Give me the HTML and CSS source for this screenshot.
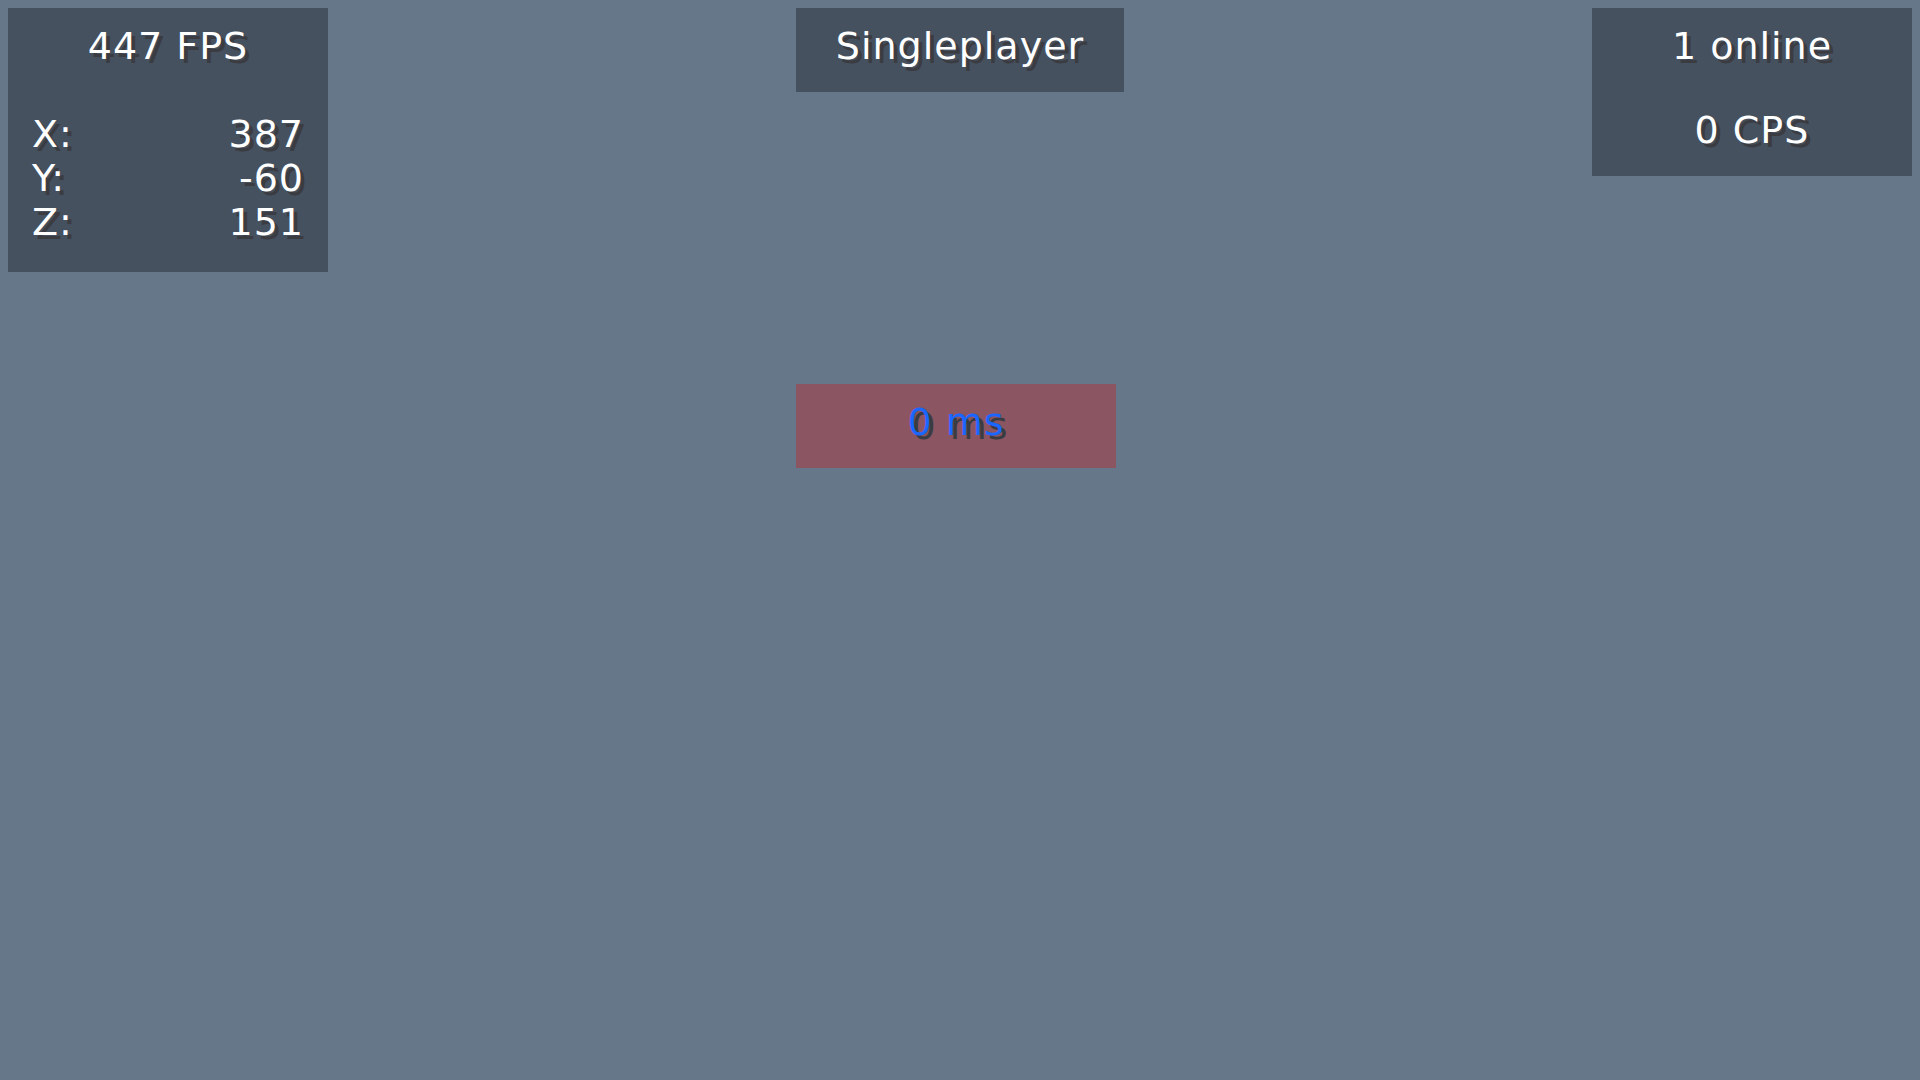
FILE: index.html
```html
<!DOCTYPE html>
<html lang="en">
<head>
<meta charset="utf-8">
<title>HUD</title>
<link rel="stylesheet" href="styles.css">
</head>
<body>
<div class="hud">
  <div class="panel stats">
    <div class="line center">447 FPS</div>
    <div class="coords">
      <div class="row"><span>X:</span><span>387</span></div>
      <div class="row"><span>Y:</span><span>-60</span></div>
      <div class="row"><span>Z:</span><span>151</span></div>
    </div>
  </div>
  <div class="middle">
    <div class="panel mode"><div class="line center">Singleplayer</div></div>
    <div class="panel ping"><div class="line center">0 ms</div></div>
  </div>
  <div class="panel online">
    <div class="line center">1 online</div>
    <div class="line center">0 CPS</div>
  </div>
</div>
</body>
</html>
```
FILE: styles.css
```css
html, body {
  margin: 0;
  padding: 0;
  width: 1920px;
  height: 1080px;
  background: #667789;
  overflow: hidden;
}
body {
  font-family: "DejaVu Sans", "Liberation Sans", sans-serif;
  font-size: 38px;
  color: #ffffff;
  letter-spacing: 1px;
  text-shadow: 4px 4px 0 #3b3c41;
}
.hud {
  display: flex;
  justify-content: space-between;
  align-items: flex-start;
  padding: 8px;
}
.panel {
  background: #45515f;
  box-sizing: border-box;
}
.line {
  line-height: 44px;
  height: 44px;
  white-space: nowrap;
}
.center { text-align: center; }
.stats {
  width: 320px;
  height: 264px;
  padding: 16px 24px 0 24px;
}
.coords {
  margin-top: 44px;
}
.row {
  display: flex;
  justify-content: space-between;
  line-height: 44px;
  height: 44px;
}
.middle {
  display: flex;
  flex-direction: column;
  align-items: flex-start;
}
.mode {
  width: 328px;
  height: 84px;
  padding-top: 16px;
}
.ping {
  width: 320px;
  height: 84px;
  padding-top: 16px;
  margin-top: 292px;
  background: #8b5561;
  color: #1a66ff;
}
.online {
  width: 320px;
  height: 168px;
  padding-top: 16px;
  display: flex;
  flex-direction: column;
  gap: 40px;
}
```
